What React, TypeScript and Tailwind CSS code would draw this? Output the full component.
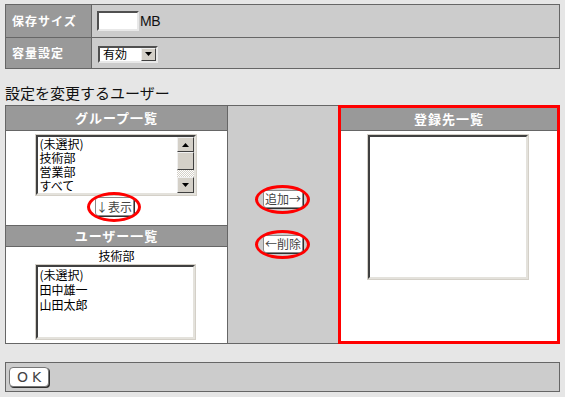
import React from "react";

const Tri = ({ up }: { up?: boolean }) => (
  <svg width="7" height="4" viewBox="0 0 7 4">
    {up ? <polygon points="3.5,0 7,4 0,4" fill="#000" /> : <polygon points="0,0 7,0 3.5,4" fill="#000" />}
  </svg>
);

const RaisedBox = ({ className, children }: { className?: string; children?: React.ReactNode }) => (
  <div
    className={
      "flex items-center justify-center bg-[#d4d0c8] border border-t-[#f0f0f0] border-l-[#f0f0f0] border-b-[#404040] border-r-[#404040] " +
      (className || "")
    }
  >
    {children}
  </div>
);

const ListBox = ({
  items,
  className,
  scroll,
  row,
}: {
  items: string[];
  className: string;
  scroll?: boolean;
  row: string;
}) => (
  <div className={"border border-[#d4d0c8] bg-white " + className}>
    <div className="flex h-full w-full border-2 border-t-[#404040] border-l-[#404040] border-r-[#e4e2dc] border-b-[#e4e2dc]">
      <div className="flex-1 overflow-hidden pl-[2px] text-[12px] text-black">
        {items.map((t) => (
          <div key={t} className={"flex items-center whitespace-nowrap " + row}>
            {t}
          </div>
        ))}
      </div>
      {scroll && (
        <div className="flex w-[17px] flex-col">
          <RaisedBox className="h-[15px]">
            <Tri up />
          </RaisedBox>
          <RaisedBox className="h-[18px]" />
          <div className="flex-1 bg-[repeating-conic-gradient(#ffffff_0_25%,#d4d0c8_0_50%)] bg-[length:2px_2px]" />
          <RaisedBox className="h-[16px]">
            <Tri />
          </RaisedBox>
        </div>
      )}
    </div>
  </div>
);

const Btn = ({ label, w, h, ring }: { label: string; w: string; h: string; ring?: boolean }) => (
  <div className="relative">
    <div
      className={
        "flex items-center justify-center rounded-[3px] border border-[#8a8a8a] bg-white text-[12px] leading-none text-[#444] shadow-[1px_1px_0_#303030] " +
        w +
        " " +
        h
      }
    >
      {label}
    </div>
    {ring && (
      <div className="pointer-events-none absolute -left-[8px] -right-[7px] -top-[5px] -bottom-[6px] rounded-[50%] border-[3px] border-[#f00]" />
    )}
  </div>
);

export default function App() {
  return (
    <div className="h-[397px] w-[565px] overflow-hidden bg-[#e6e6e6] px-[5px] pt-[4px] font-['Noto_Sans_CJK_JP',sans-serif] text-black">
      {/* top settings table */}
      <div className="w-[555px] border border-[#666]">
        <div className="flex h-[33px] border-b border-[#666]">
          <div className="flex w-[86px] items-center border-r border-[#666] bg-[#999] pl-[6px] text-[12px] font-bold tracking-[1px] text-white">
            保存サイズ
          </div>
          <div className="flex flex-1 items-center bg-[#ccc] pl-[5px]">
            <div className="h-[20px] w-[42px] border-2 border-t-[#505050] border-l-[#505050] border-r-[#e8e8e8] border-b-[#e8e8e8] bg-white" />
            <span className="ml-[1px] font-['Liberation_Sans',sans-serif] text-[14px] tracking-[-0.5px] text-[#111]">MB</span>
          </div>
        </div>
        <div className="flex h-[30px]">
          <div className="flex w-[86px] items-center border-r border-[#666] bg-[#999] pl-[6px] text-[12px] font-bold tracking-[1px] text-white">
            容量設定
          </div>
          <div className="flex flex-1 items-center bg-[#ccc] pl-[6px] pt-[2px]">
            <div className="flex h-[17px] w-[60px] items-center border-2 border-t-[#505050] border-l-[#505050] border-r-[#e8e8e8] border-b-[#e8e8e8] bg-white">
              <span className="flex-1 pl-[3px] text-[12px] leading-none">有効</span>
              <RaisedBox className="h-[13px] w-[15px]">
                <Tri />
              </RaisedBox>
            </div>
          </div>
        </div>
      </div>

      {/* heading */}
      <div className="pt-[14px] pb-[2px] text-[15px] leading-[20px] text-[#111]">設定を変更するユーザー</div>

      {/* main panel */}
      <div className="flex h-[239px] w-[555px]">
        {/* left column */}
        <div className="flex w-[223px] flex-col border border-[#666] bg-white">
          <div className="flex h-[25px] items-center justify-center border-b border-[#666] bg-[#999] text-[13px] font-bold tracking-[1px] text-white">
            グループ一覧
          </div>
          <div className="flex h-[94px] flex-col items-center">
            <ListBox
              scroll
              row="h-[14px] leading-[14px]"
              className="mt-[3px] ml-[-2px] h-[62px] w-[162px]"
              items={["(未選択)", "技術部", "営業部", "すべて"]}
            />
            <div className="mt-[1px] ml-[-5px]">
              <Btn label="↓表示" w="w-[39px]" h="h-[19px]" ring />
            </div>
          </div>
          <div className="flex h-[22px] items-center justify-center border-y border-[#666] bg-[#999] text-[13px] font-bold tracking-[1px] text-white">
            ユーザー一覧
          </div>
          <div className="flex flex-1 flex-col items-center">
            <div className="pt-[1px] text-[12px] leading-[16px]">技術部</div>
            <ListBox
              row="h-[15px] leading-[15px]"
              className="ml-[-3px] h-[76px] w-[161px]"
              items={["(未選択)", "田中雄一", "山田太郎"]}
            />
          </div>
        </div>

        {/* middle column */}
        <div className="flex w-[110px] flex-col items-center border-y border-[#666] bg-[#ccc] pt-[84px]">
          <Btn label="追加→" w="w-[40px]" h="h-[18px]" ring />
          <div className="h-[27px]" />
          <Btn label="←削除" w="w-[40px]" h="h-[18px]" ring />
        </div>

        {/* right column */}
        <div className="flex w-[222px] flex-col border-[3px] border-[#f00] bg-white">
          <div className="flex h-[23px] items-center justify-center border-b border-[#666] bg-[#999] text-[13px] font-bold tracking-[1px] text-white">
            登録先一覧
          </div>
          <div className="flex flex-1 flex-col items-center">
            <ListBox row="h-[15px]" className="mt-[3px] ml-[-2px] h-[146px] w-[162px]" items={[]} />
          </div>
        </div>
      </div>

      {/* footer */}
      <div className="mt-[18px] flex h-[30px] w-[555px] items-center border border-[#666] bg-[#ccc] pl-[3px]">
        <div className="flex h-[20px] w-[40px] items-center justify-center rounded-[4px] border border-[#777] bg-white font-['DejaVu_Sans',sans-serif] text-[14px] leading-none tracking-[4px] text-[#444] shadow-[1px_1px_0_#303030]">
          <span className="pl-[4px]">OK</span>
        </div>
      </div>
    </div>
  );
}
